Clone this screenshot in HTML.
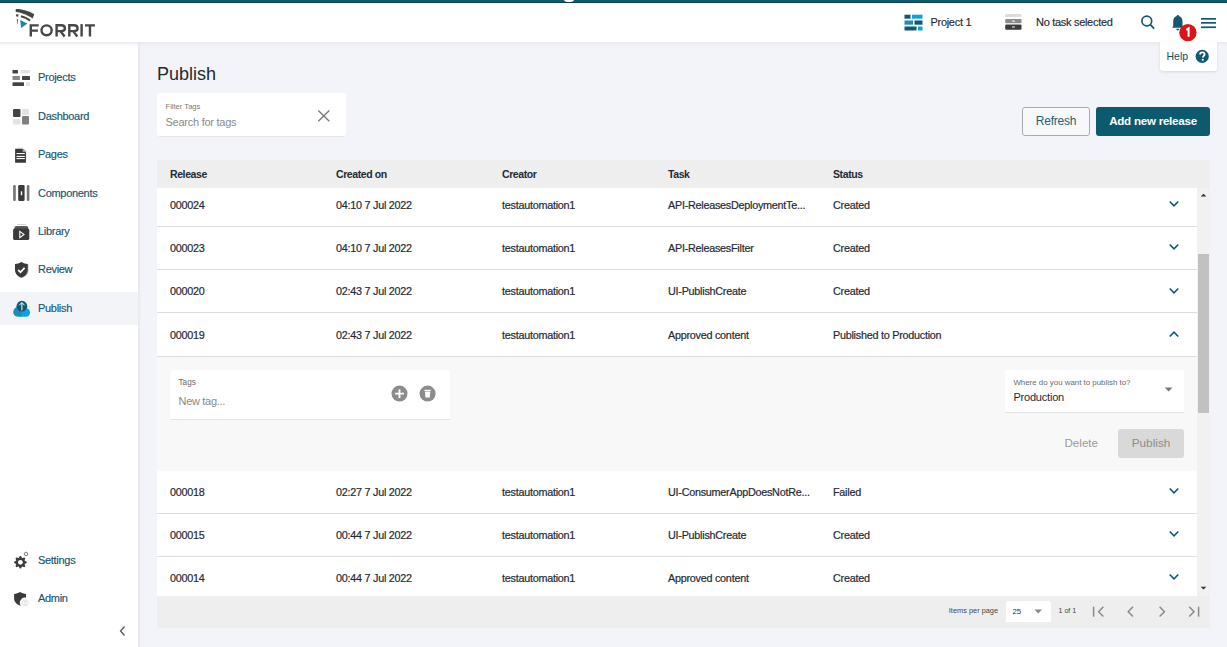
<!DOCTYPE html>
<html><head><meta charset="utf-8">
<style>
*{box-sizing:border-box;margin:0;padding:0}
html,body{width:1227px;height:647px;overflow:hidden;background:#f3f4f9;font-family:"Liberation Sans",sans-serif;color:#1e2a33}
.abs{position:absolute}
#topbar{position:absolute;left:0;top:0;width:1227px;height:3px;background:linear-gradient(#0f5b70 0,#0f5b70 2px,#073f52 2px,#073f52 3px)}
#header{position:absolute;left:0;top:3px;width:1227px;height:39px;background:#fff}
#hdrshadow{position:absolute;left:0;top:42px;width:1227px;height:4px;background:linear-gradient(#e9eaee,rgba(243,244,248,0))}
#sidebar{position:absolute;left:0;top:42px;width:138px;height:605px;background:#fff}
#sbshadow{position:absolute;left:138px;top:42px;width:3px;height:605px;background:linear-gradient(90deg,#e6e7eb,rgba(243,244,248,0))}
.nav{position:absolute;left:0;width:138px;height:33px}
.nav .t{position:absolute;left:38px;top:0;line-height:33px;font-size:11px;letter-spacing:-0.3px;color:#145473;-webkit-text-stroke:0.15px #145473}
.nav svg{position:absolute;left:0;top:0}
.hd{position:absolute;font-size:11px;letter-spacing:-0.3px;color:#1e2a33;-webkit-text-stroke:0.15px #1e2a33}
.th{position:absolute;top:160px;height:28px;line-height:28px;font-size:10.5px;letter-spacing:-0.4px;font-weight:bold;color:#1e2a33}
.row{position:absolute;left:157px;width:1040px;background:#fff;border-bottom:1px solid #e3e3e3}
.c{position:absolute;font-size:10.8px;letter-spacing:-0.25px;color:#1e2a33;white-space:nowrap;-webkit-text-stroke:0.2px #1e2a33}
</style></head><body>
<div id="topbar"></div>
<div class="abs" style="left:564px;top:-3.5px;width:10px;height:5.2px;border-radius:50%;background:#fff"></div>
<div id="header"></div>
<div id="sidebar"></div>
<div id="hdrshadow"></div>
<div id="sbshadow"></div>

<!-- logo -->
<svg class="abs" style="left:0;top:0" width="100" height="42" viewBox="0 0 100 42">
  <path d="M16.4 9.1 C21 9.2 28.5 10.5 34.3 14.3 L32.6 18.4 C27 14.8 20.5 12.3 16.2 12 C15.3 11.9 15.3 9.1 16.4 9.1 Z" fill="#474747"/>
  <path d="M21.1 15.2 C24.6 16 27.6 17.6 30.6 19.7 L29.6 21.4 C26.6 19.3 23.7 17.9 20.6 17.2 Z" fill="#474747"/>
  <path d="M15.9 14.2 L18.6 14.6 L18.1 16.8 L16.3 16.6 Z" fill="#474747"/>
  <path d="M16.8 19.2 L18 19.2 L17.6 24 L17.2 24 Z" fill="#555"/>
  <path d="M20.1 20 L27.4 23.5 L21.1 27.9 Z" fill="#1a87b0"/>
  <g stroke="#474747" stroke-width="2.4" fill="none">
    <path d="M30.8 36.4 V25.4 H38.7 M30.8 30.6 H37.9"/>
    <ellipse cx="46.6" cy="30.3" rx="5.1" ry="4.9"/>
    <path d="M56.6 36.5 V25.3 H61.2 C63.5 25.3 64.9 26.6 64.9 28.5 C64.9 30.3 63.5 31.1 61.2 31.1 H56.6 M60.4 31.1 L64.6 36.5"/>
    <path d="M69.3 36.5 V25.3 H73.9 C76.2 25.3 77.6 26.6 77.6 28.5 C77.6 30.3 76.2 31.1 73.9 31.1 H69.3 M73.1 31.1 L77.3 36.5"/>
    <path d="M81.6 24.1 V36.5"/>
    <path d="M85 25.4 H94.9 M89.95 25.4 V36.5"/>
  </g>
</svg>

<!-- sidebar nav -->
<div class="nav" style="top:61px">
 <svg width="40" height="33" viewBox="0 0 40 33">
  <rect x="12.5" y="9" width="5.5" height="3.6" rx="0.6" fill="#444"/>
  <rect x="20.5" y="9" width="9.5" height="3.6" rx="0.6" fill="#e3e3e3"/>
  <rect x="12.5" y="15" width="7.5" height="4" rx="0.6" fill="#8a8a8a"/>
  <rect x="22" y="15" width="8" height="4" rx="0.6" fill="#444"/>
  <rect x="12.5" y="21.3" width="11.5" height="3.8" rx="0.6" fill="#444"/>
  <rect x="26" y="21.3" width="4" height="3.8" rx="0.6" fill="#e3e3e3"/>
 </svg><span class="t">Projects</span></div>
<div class="nav" style="top:100px">
 <svg width="40" height="33" viewBox="0 0 40 33">
  <rect x="13" y="9" width="7.5" height="8" rx="1" fill="#444"/>
  <rect x="22" y="9" width="7" height="6" rx="1" fill="#e3e3e3"/>
  <rect x="13" y="19" width="7.5" height="5.5" rx="1" fill="#e3e3e3"/>
  <rect x="22" y="16" width="7" height="8.5" rx="1" fill="#808080"/>
 </svg><span class="t">Dashboard</span></div>
<div class="nav" style="top:138px">
 <svg width="40" height="33" viewBox="0 0 40 33">
  <path d="M17 9.3 H23.5 L27 12.8 V23 H17 Z" fill="#efefef"/>
  <path d="M15.1 10.8 H22.6 L25.9 14.1 V24.7 H15.1 Z" fill="#3a3a3a"/>
  <path d="M22.6 10.8 V14.1 H25.9 Z" fill="#9a9a9a"/>
  <rect x="16.5" y="15" width="8.3" height="1.1" fill="#fff"/>
  <rect x="16.5" y="17.9" width="8.3" height="1.1" fill="#fff"/>
  <rect x="16.5" y="20" width="8.3" height="1.1" fill="#fff"/>
 </svg><span class="t">Pages</span></div>
<div class="nav" style="top:177px">
 <svg width="40" height="33" viewBox="0 0 40 33">
  <rect x="13.1" y="8" width="2.7" height="16" rx="1.2" fill="#777"/>
  <rect x="18.2" y="8" width="6.4" height="16" rx="1.3" fill="#3a3a3a"/>
  <rect x="20.8" y="14.3" width="1.4" height="3.9" rx="0.5" fill="#fff"/>
  <rect x="26.8" y="8" width="2.6" height="16" rx="1.2" fill="#777"/>
 </svg><span class="t">Components</span></div>
<div class="nav" style="top:215px">
 <svg width="40" height="33" viewBox="0 0 40 33">
  <rect x="17" y="9" width="8.8" height="0.9" fill="#d0d0d0"/>
  <rect x="14.4" y="11" width="13.9" height="5" rx="2" fill="#5a5a5a"/>
  <rect x="13.1" y="13.6" width="16.2" height="11.4" rx="1.6" fill="#3a3a3a"/>
  <path d="M19.8 16.4 L24 19.5 L19.8 22.6 Z" fill="none" stroke="#fff" stroke-width="1.1"/>
 </svg><span class="t">Library</span></div>
<div class="nav" style="top:253px">
 <svg width="40" height="33" viewBox="0 0 40 33">
  <path d="M22.4 9.6 C24.3 10.8 26.5 11.5 28.8 11.5 V17 C28.8 21 26 23.8 22.4 24.7 Z" fill="#bbb" opacity="0.6"/>
  <path d="M21.4 9.1 C23.3 10.3 25.5 11 27.8 11 V16.8 C27.8 20.8 25 23.6 21.4 24.7 C17.8 23.6 15 20.8 15 16.8 V11 C17.3 11 19.5 10.3 21.4 9.1 Z" fill="#3a3a3a"/>
  <path d="M18.2 17 L20.5 19.3 L24.6 14.9" stroke="#fff" stroke-width="1.8" fill="none"/>
 </svg><span class="t">Review</span></div>
<div class="nav" style="top:292px;background:#f3f4f8">
 <svg width="40" height="33" viewBox="0 0 40 33">
  <path d="M17.5 25.3 C14.2 25.3 12.7 22.8 12.7 20.2 C12.7 17 15.2 14.6 18 14.6 C19 10.5 24.5 9.8 26.8 15.2 C29 15.5 30.5 17.8 30.5 20.3 C30.5 23 28.8 25.3 26.2 25.3 Z" fill="#fff"/>
  <path d="M17.6 24.8 C14.6 24.8 13.2 22.6 13.2 20.1 C13.2 17.2 15.4 15.1 18 15.1 H22 V24.8 Z" fill="#1f8dbd"/>
  <path d="M21.5 15.4 C26.5 15 30 17.5 30 20.4 C30 23 28.4 24.8 26 24.8 H21.5 Z" fill="#0ea2df"/>
  <circle cx="21.9" cy="14.2" r="5.4" fill="#0f5a72"/>
  <path d="M21.9 18.3 V10.6 M19.2 13.3 L21.9 10.6 L24.6 13.3" stroke="#fff" stroke-width="1" fill="none"/>
 </svg><span class="t">Publish</span></div>
<div class="nav" style="top:544px">
 <svg width="40" height="33" viewBox="0 0 40 33">
  <g transform="translate(20.4 18.3)">
   <path d="M-1.62 -4.31 L-0.63 -6.27 L0.63 -6.27 L1.62 -4.31 L1.90 -4.19 L3.99 -4.88 L4.88 -3.99 L4.19 -1.90 L4.31 -1.62 L6.27 -0.63 L6.27 0.63 L4.31 1.62 L4.19 1.90 L4.88 3.99 L3.99 4.88 L1.90 4.19 L1.62 4.31 L0.63 6.27 L-0.63 6.27 L-1.62 4.31 L-1.90 4.19 L-3.99 4.88 L-4.88 3.99 L-4.19 1.90 L-4.31 1.62 L-6.27 0.63 L-6.27 -0.63 L-4.31 -1.62 L-4.19 -1.90 L-4.88 -3.99 L-3.99 -4.88 L-1.90 -4.19 Z" fill="#3c3c3c"/>
   <circle r="2.4" fill="#fff"/>
  </g>
  <path d="M27.90 10.00 L26.95 11.65 L25.05 11.65 L24.10 10.00 L25.05 8.35 L26.95 8.35 Z" fill="none" stroke="#777" stroke-width="1"/>
 </svg><span class="t">Settings</span></div>
<div class="nav" style="top:582px">
 <svg width="40" height="33" viewBox="0 0 40 33">
  <path d="M20 9.9 C22 10.9 24 11.8 26 12 V15.6 A5.2 5.2 0 0 0 20.8 23.7 C17 22.6 14.1 19.8 14.1 16.4 V12 C16.3 11.8 18.2 10.9 20 9.9 Z" fill="#3a3a3a"/>
  <circle cx="25.2" cy="20.8" r="2.9" fill="#fafafa" stroke="#e2e2e2" stroke-width="1"/>
  <circle cx="25.2" cy="19.9" r="0.9" fill="#d8d8d8"/>
  <path d="M23.6 22.6 C23.9 21.6 26.5 21.6 26.8 22.6 Z" fill="#d8d8d8"/>
 </svg><span class="t">Admin</span></div>
<svg class="abs" style="left:117px;top:624px" width="12" height="14" viewBox="0 0 12 14">
 <path d="M7.5 2.5 L3.5 7 L7.5 11.5" stroke="#555" stroke-width="1.3" fill="none"/>
</svg>

<!-- header right -->
<svg class="abs" style="left:904px;top:14px" width="20" height="17" viewBox="0 0 20 17">
  <rect x="0.5" y="0.7" width="6" height="4" fill="#0f5a72"/>
  <rect x="8" y="0.7" width="10.5" height="4" fill="#0ea2df"/>
  <rect x="0.5" y="6.5" width="8.5" height="4.2" fill="#2589b5"/>
  <rect x="10.5" y="6.5" width="8" height="4.2" fill="#0f5a72"/>
  <rect x="0.5" y="12.5" width="12" height="4" fill="#0f5a72"/>
  <rect x="14" y="12.5" width="4.5" height="4" fill="#0ea2df"/>
</svg>
<div class="hd" style="left:930.5px;top:15.3px;line-height:14px">Project 1</div>
<svg class="abs" style="left:1004px;top:13px" width="19" height="18" viewBox="0 0 19 18">
  <rect x="1.2" y="1" width="16.3" height="3" rx="1" fill="#dcdcdc"/>
  <rect x="1.2" y="6" width="16.3" height="4.2" rx="1" fill="#8a8a8a"/>
  <rect x="8" y="7.6" width="2.8" height="1" fill="#fff"/>
  <rect x="1.2" y="11.5" width="16.3" height="5.2" rx="1" fill="#3c3c3c"/>
  <rect x="8" y="13.5" width="2.8" height="1" fill="#fff"/>
</svg>
<div class="hd" style="left:1036px;top:15.3px;line-height:14px">No task selected</div>
<svg class="abs" style="left:1138px;top:12px" width="20" height="20" viewBox="0 0 20 20">
  <circle cx="8.8" cy="9" r="4.9" stroke="#0f5a72" stroke-width="1.7" fill="none"/>
  <path d="M12.3 12.6 L16.2 16.6" stroke="#0f5a72" stroke-width="1.8"/>
</svg>
<svg class="abs" style="left:1168px;top:12px" width="20" height="22" viewBox="0 0 20 22">
  <path d="M9.8 3 C10.5 3 10.9 3.5 10.9 4.1 C13.3 4.8 14.5 6.8 14.5 9.5 V14 L15.5 15.8 H4.2 L5.2 14 V9.5 C5.2 6.8 6.5 4.8 8.7 4.1 C8.7 3.5 9.2 3 9.8 3 Z" fill="#0f5a72"/>
  <path d="M8.3 16.8 H11.3 C11.3 17.7 10.6 18.4 9.8 18.4 C9 18.4 8.3 17.7 8.3 16.8 Z" fill="#0f5a72"/>
</svg>
<svg class="abs" style="left:1178px;top:23px" width="20" height="20" viewBox="0 0 20 20">
  <circle cx="9.9" cy="9.6" r="8.7" fill="#d7161c"/>
  <path d="M8.3 6.8 L10.6 5.4 V13.8" stroke="#fff" stroke-width="2" fill="none"/>
</svg>
<svg class="abs" style="left:1200px;top:16px" width="18" height="14" viewBox="0 0 18 14">
  <rect x="1" y="2" width="15" height="1.7" fill="#0f5a72"/>
  <rect x="1" y="6" width="15" height="1.7" fill="#0f5a72"/>
  <rect x="1" y="10.4" width="15" height="1.7" fill="#0f5a72"/>
</svg>
<div class="abs" style="left:1160px;top:42px;width:57px;height:29px;background:#fff;border-radius:0 0 3px 3px;box-shadow:0 1px 3px rgba(0,0,0,0.12)"></div>
<div class="abs" style="left:1166.5px;top:49px;font-size:10.5px;line-height:14px;color:#0f5068">Help</div>
<svg class="abs" style="left:1194px;top:48px" width="17" height="17" viewBox="0 0 17 17">
  <circle cx="8.2" cy="8.4" r="6.6" fill="#0f5a72"/>
  <path d="M6 6.6 C6 5.2 7 4.3 8.3 4.3 C9.6 4.3 10.6 5.2 10.6 6.4 C10.6 7.8 8.8 8 8.8 9.6" stroke="#fff" stroke-width="1.8" fill="none"/>
  <circle cx="8.8" cy="11.8" r="1.1" fill="#fff"/>
</svg>

<!-- page title & filter -->
<div class="abs" style="left:157px;top:63px;font-size:18px;line-height:22px;color:#1e2a33">Publish</div>
<div class="abs" style="left:157px;top:93px;width:189px;height:44px;background:#fff;border-radius:3px;border-bottom:1px solid #e6e6ea"></div>
<div class="abs" style="left:165.5px;top:102px;font-size:7.6px;line-height:9px;color:#7a7a7a">Filter Tags</div>
<div class="abs" style="left:165.5px;top:115.5px;font-size:11px;letter-spacing:-0.25px;line-height:12px;color:#8a8a8a">Search for tags</div>
<svg class="abs" style="left:316px;top:108px" width="15" height="15" viewBox="0 0 15 15">
  <path d="M2.3 2.5 L13.3 13.2 M13.3 2.5 L2.3 13.2" stroke="#777" stroke-width="1.3"/>
</svg>

<!-- buttons -->
<div class="abs" style="left:1022px;top:107px;width:68px;height:29px;border:1px solid #aaa;border-radius:3px;background:#f7f8fa"></div>
<div class="abs" style="left:1022px;top:107px;width:68px;height:29px;line-height:28px;text-align:center;font-size:12px;letter-spacing:-0.2px;color:#1f5e76">Refresh</div>
<div class="abs" style="left:1096px;top:107px;width:114px;height:29px;border-radius:3px;background:#0d5a6e;line-height:28.4px;text-align:center;font-size:11.6px;letter-spacing:-0.25px;font-weight:bold;color:#fff">Add new release</div>


<!-- table -->
<div class="abs" style="left:157px;top:160px;width:1053px;height:28.2px;background:#eeeeee"></div>
<div class="th" style="left:170px">Release</div>
<div class="th" style="left:336px">Created on</div>
<div class="th" style="left:502px">Creator</div>
<div class="th" style="left:668px">Task</div>
<div class="th" style="left:833px">Status</div>
<div class="abs" style="left:1197px;top:188.2px;width:13px;height:407.8px;background:#f1f1f1"></div>
<div class="abs" style="left:1198px;top:254px;width:10.8px;height:158.5px;background:#c1c1c1"></div>
<svg class="abs" style="left:1199px;top:192px" width="9" height="6" viewBox="0 0 9 6"><path d="M1.6 4.6 L4.5 1.7 L7.4 4.6 Z" fill="#333"/></svg>
<svg class="abs" style="left:1199px;top:585px" width="9" height="6" viewBox="0 0 9 6"><path d="M1.6 1.7 L4.5 4.6 L7.4 1.7 Z" fill="#333"/></svg>
<div class="abs" style="left:157px;top:188.2px;width:1040px;height:407.8px;overflow:hidden">
<div class="abs" style="left:0;top:-5.20px;width:1040px;height:43.30px;background:#fff"></div>
<div class="abs" style="left:0;top:38.10px;width:1040px;height:43.30px;background:#fff"></div>
<div class="abs" style="left:0;top:81.40px;width:1040px;height:43.30px;background:#fff"></div>
<div class="abs" style="left:0;top:124.70px;width:1040px;height:43.30px;background:#fff"></div>
<div class="abs" style="left:0;top:281.90px;width:1040px;height:43.30px;background:#fff"></div>
<div class="abs" style="left:0;top:325.10px;width:1040px;height:43.30px;background:#fff"></div>
<div class="abs" style="left:0;top:368.40px;width:1040px;height:43.30px;background:#fff"></div>
<div class="abs" style="left:0;top:37.60px;width:1040px;height:1px;background:#dcdcdc"></div>
<div class="c" style="left:13px;top:9.45px;line-height:14px">000024</div><div class="c" style="left:179px;top:9.45px;line-height:14px">04:10 7 Jul 2022</div><div class="c" style="left:345px;top:9.45px;line-height:14px">testautomation1</div><div class="c" style="left:511px;top:9.45px;line-height:14px">API-ReleasesDeploymentTe...</div><div class="c" style="left:676px;top:9.45px;line-height:14px">Created</div><svg class="abs" style="left:1010.2px;top:9.75px" width="14" height="12" viewBox="0 0 14 12"><path d="M2.7 3.5 L7 7.8 L11.3 3.5" stroke="#0f5a72" stroke-width="1.6" fill="none"/></svg>
<div class="abs" style="left:0;top:80.90px;width:1040px;height:1px;background:#dcdcdc"></div>
<div class="c" style="left:13px;top:52.75px;line-height:14px">000023</div><div class="c" style="left:179px;top:52.75px;line-height:14px">04:10 7 Jul 2022</div><div class="c" style="left:345px;top:52.75px;line-height:14px">testautomation1</div><div class="c" style="left:511px;top:52.75px;line-height:14px">API-ReleasesFilter</div><div class="c" style="left:676px;top:52.75px;line-height:14px">Created</div><svg class="abs" style="left:1010.2px;top:53.05px" width="14" height="12" viewBox="0 0 14 12"><path d="M2.7 3.5 L7 7.8 L11.3 3.5" stroke="#0f5a72" stroke-width="1.6" fill="none"/></svg>
<div class="abs" style="left:0;top:124.20px;width:1040px;height:1px;background:#dcdcdc"></div>
<div class="c" style="left:13px;top:96.05px;line-height:14px">000020</div><div class="c" style="left:179px;top:96.05px;line-height:14px">02:43 7 Jul 2022</div><div class="c" style="left:345px;top:96.05px;line-height:14px">testautomation1</div><div class="c" style="left:511px;top:96.05px;line-height:14px">UI-PublishCreate</div><div class="c" style="left:676px;top:96.05px;line-height:14px">Created</div><svg class="abs" style="left:1010.2px;top:96.35px" width="14" height="12" viewBox="0 0 14 12"><path d="M2.7 3.5 L7 7.8 L11.3 3.5" stroke="#0f5a72" stroke-width="1.6" fill="none"/></svg>
<div class="abs" style="left:0;top:167.50px;width:1040px;height:1px;background:#dcdcdc"></div>
<div class="c" style="left:13px;top:139.35px;line-height:14px">000019</div><div class="c" style="left:179px;top:139.35px;line-height:14px">02:43 7 Jul 2022</div><div class="c" style="left:345px;top:139.35px;line-height:14px">testautomation1</div><div class="c" style="left:511px;top:139.35px;line-height:14px">Approved content</div><div class="c" style="left:676px;top:139.35px;line-height:14px">Published to Production</div><svg class="abs" style="left:1010.2px;top:139.65px" width="14" height="12" viewBox="0 0 14 12"><path d="M2.7 8.5 L7 4.2 L11.3 8.5" stroke="#0f5a72" stroke-width="1.6" fill="none"/></svg>
<div class="abs" style="left:0;top:324.70px;width:1040px;height:1px;background:#dcdcdc"></div>
<div class="c" style="left:13px;top:296.55px;line-height:14px">000018</div><div class="c" style="left:179px;top:296.55px;line-height:14px">02:27 7 Jul 2022</div><div class="c" style="left:345px;top:296.55px;line-height:14px">testautomation1</div><div class="c" style="left:511px;top:296.55px;line-height:14px">UI-ConsumerAppDoesNotRe...</div><div class="c" style="left:676px;top:296.55px;line-height:14px">Failed</div><svg class="abs" style="left:1010.2px;top:296.85px" width="14" height="12" viewBox="0 0 14 12"><path d="M2.7 3.5 L7 7.8 L11.3 3.5" stroke="#0f5a72" stroke-width="1.6" fill="none"/></svg>
<div class="abs" style="left:0;top:367.90px;width:1040px;height:1px;background:#dcdcdc"></div>
<div class="c" style="left:13px;top:339.35px;line-height:14px">000015</div><div class="c" style="left:179px;top:339.35px;line-height:14px">00:44 7 Jul 2022</div><div class="c" style="left:345px;top:339.35px;line-height:14px">testautomation1</div><div class="c" style="left:511px;top:339.35px;line-height:14px">UI-PublishCreate</div><div class="c" style="left:676px;top:339.35px;line-height:14px">Created</div><svg class="abs" style="left:1010.2px;top:339.65px" width="14" height="12" viewBox="0 0 14 12"><path d="M2.7 3.5 L7 7.8 L11.3 3.5" stroke="#0f5a72" stroke-width="1.6" fill="none"/></svg>
<div class="abs" style="left:0;top:411.20px;width:1040px;height:1px;background:#dcdcdc"></div>
<div class="c" style="left:13px;top:382.65px;line-height:14px">000014</div><div class="c" style="left:179px;top:382.65px;line-height:14px">00:44 7 Jul 2022</div><div class="c" style="left:345px;top:382.65px;line-height:14px">testautomation1</div><div class="c" style="left:511px;top:382.65px;line-height:14px">Approved content</div><div class="c" style="left:676px;top:382.65px;line-height:14px">Created</div><svg class="abs" style="left:1010.2px;top:382.95px" width="14" height="12" viewBox="0 0 14 12"><path d="M2.7 3.5 L7 7.8 L11.3 3.5" stroke="#0f5a72" stroke-width="1.6" fill="none"/></svg>
<div class="abs" style="left:0;top:168.50px;width:1040px;height:114.20px;background:#f8f8f8"></div>
</div>
<div class="abs" style="left:170px;top:369.7px;width:280px;height:50.6px;background:#fff;border-radius:3px 3px 0 0;border-bottom:1px solid #e2e2e2"></div>
<div class="abs" style="left:178.5px;top:378px;font-size:8.2px;line-height:10px;color:#6a6a6a">Tags</div>
<div class="abs" style="left:178.5px;top:395px;font-size:11px;letter-spacing:-0.3px;line-height:12px;color:#8a8a8a">New tag...</div>
<svg class="abs" style="left:390px;top:384px" width="20" height="20" viewBox="0 0 20 20">
  <circle cx="9.5" cy="9.6" r="8" fill="#8c8c8c"/>
  <path d="M9.5 5.2 V14 M5.1 9.6 H13.9" stroke="#fff" stroke-width="1.9"/>
</svg>
<svg class="abs" style="left:418px;top:384px" width="20" height="20" viewBox="0 0 20 20">
  <circle cx="9.6" cy="9.6" r="8" fill="#8c8c8c"/>
  <rect x="6.4" y="5.8" width="6.4" height="1.2" fill="#fff"/>
  <path d="M7 7.6 H12.2 L11.8 13.6 H7.4 Z" fill="#fff"/>
</svg>
<div class="abs" style="left:1004.6px;top:369.6px;width:179.6px;height:43.8px;background:#fff;border-radius:3px 3px 0 0;border-bottom:1px solid #e2e2e2"></div>
<div class="abs" style="left:1013.4px;top:377.5px;font-size:7.9px;line-height:10px;color:#6a6a6a">Where do you want to publish to?</div>
<div class="abs" style="left:1013.4px;top:390.7px;font-size:11px;letter-spacing:-0.2px;line-height:12px;color:#1e2a33">Production</div>
<svg class="abs" style="left:1163px;top:386px" width="11" height="7" viewBox="0 0 11 7"><path d="M1.8 1.6 L5.6 5.6 L9.4 1.6 Z" fill="#777"/></svg>
<div class="abs" style="left:1064.5px;top:436px;font-size:11.6px;line-height:14px;color:#9a9a9a">Delete</div>
<div class="abs" style="left:1118.2px;top:429.4px;width:65.7px;height:28.5px;background:#d9d9d9;border-radius:3px;line-height:28.5px;text-align:center;font-size:11.8px;color:#8c8c8c">Publish</div>

<!-- pagination -->
<div class="abs" style="left:157px;top:596px;width:1053px;height:32px;background:#eeeeee"></div>
<div class="abs" style="left:948.8px;top:606px;font-size:7.4px;line-height:10px;color:#444">Items per page</div>
<div class="abs" style="left:1006px;top:601px;width:45px;height:21px;background:#fff;border-radius:3px 3px 0 0"></div>
<div class="abs" style="left:1012.5px;top:606.5px;font-size:7.8px;line-height:10px;color:#333">25</div>
<svg class="abs" style="left:1033px;top:608px" width="10" height="7" viewBox="0 0 10 7"><path d="M1.5 1.6 L5.2 5.6 L9 1.6 Z" fill="#888"/></svg>
<div class="abs" style="left:1058.5px;top:606.2px;font-size:7.1px;line-height:10px;color:#444">1 of 1</div>
<svg class="abs" style="left:1090px;top:604px" width="16" height="15" viewBox="0 0 16 15">
  <path d="M3.6 2.7 V12.7" stroke="#8a8a8a" stroke-width="1.5"/>
  <path d="M13.4 2.8 L8.6 7.7 L13.4 12.6" stroke="#8a8a8a" stroke-width="1.5" fill="none"/>
</svg>
<svg class="abs" style="left:1123px;top:604px" width="14" height="15" viewBox="0 0 14 15">
  <path d="M10 2.8 L5.2 7.7 L10 12.6" stroke="#8a8a8a" stroke-width="1.5" fill="none"/>
</svg>
<svg class="abs" style="left:1155px;top:604px" width="14" height="15" viewBox="0 0 14 15">
  <path d="M4.6 2.8 L9.4 7.7 L4.6 12.6" stroke="#8a8a8a" stroke-width="1.5" fill="none"/>
</svg>
<svg class="abs" style="left:1186px;top:604px" width="16" height="15" viewBox="0 0 16 15">
  <path d="M3.2 2.8 L8 7.7 L3.2 12.6" stroke="#8a8a8a" stroke-width="1.5" fill="none"/>
  <path d="M12.6 2.7 V12.7" stroke="#8a8a8a" stroke-width="1.5"/>
</svg>
</body></html>
